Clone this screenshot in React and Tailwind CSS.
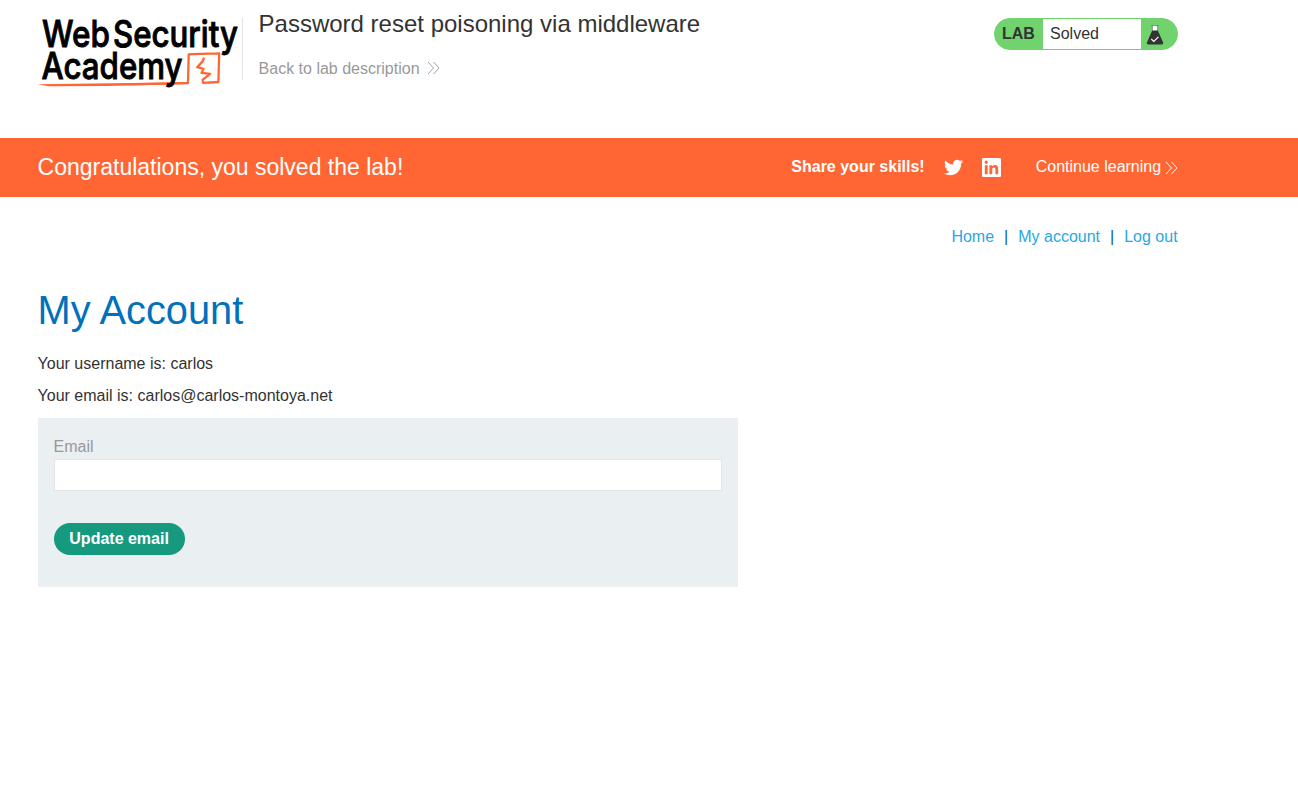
function Logo() {
  return (
    <svg className="block h-[70px] w-[204.4px] shrink-0 overflow-visible" viewBox="0 0 204.4 70" role="img" aria-label="Web Security Academy">
      <path
        d="M90 66.2 C115 65.6 132 65.6 150 65 L150.7 36.5 C160 35.6 172 35.8 181.2 35.4 L180.4 64 L165.2 64.8 L164.6 61.8 L172.2 55.8 L163.6 54.8 L165.6 50.8 L159.2 49.2 L164.6 43.4 L166 39.6"
        fill="none"
        stroke="#ff6633"
        strokeWidth="2.3"
        strokeLinejoin="round"
      />
      <path d="M0 66.2 L90 65.1 L134 64.8 L134 66.6 L70 68 L10 68.2 Z" fill="#ff6633" />
      <g fill="#000" stroke="#000" strokeWidth="0.9" fontFamily="Inter, 'Liberation Sans', sans-serif" fontSize="37" fontWeight="500">
        <text x="4" y="28.6" textLength="68" lengthAdjust="spacingAndGlyphs">Web</text>
        <text x="75" y="28.6" textLength="125" lengthAdjust="spacingAndGlyphs">Security</text>
        <text x="3.6" y="60.8" textLength="141" lengthAdjust="spacingAndGlyphs">Academy</text>
      </g>
    </svg>
  );
}

function DoubleChevron({ className }) {
  return (
    <svg className={className} viewBox="0 0 13 14" fill="none" stroke="currentColor" strokeWidth="0.9">
      <path d="M1 1 L6.5 7 L1 13 M6.5 1 L12 7 L6.5 13" />
    </svg>
  );
}

function Flask() {
  return (
    <svg className="block h-[22px] w-[18px]" viewBox="0 0 18 22">
      <path d="M6.5 1.5 H11.5 V8 H6.5 Z" fill="#fff" />
      <path d="M5.4 1.5 H12.6 M6.3 1 V7 M11.7 1 V7" stroke="#666" strokeWidth="0.6" />
      <path d="M6.2 6.5 H11.8 L17 18.3 Q17.6 20.5 15.5 20.5 H2.5 Q0.4 20.5 1 18.3 Z" fill="#333332" />
      <path d="M5.3 15 L7.8 17.4 L12.4 12.8" fill="none" stroke="#fff" strokeWidth="1.1" />
    </svg>
  );
}

function Twitter() {
  return (
    <svg className="block size-[19px]" viewBox="0 0 24 24" fill="#fff">
      <path d="M23.953 4.57a10 10 0 01-2.825.775 4.958 4.958 0 002.163-2.723c-.951.555-2.005.959-3.127 1.184a4.92 4.92 0 00-8.384 4.482C7.69 8.095 4.067 6.13 1.64 3.162a4.822 4.822 0 00-.666 2.475c0 1.71.87 3.213 2.188 4.096a4.904 4.904 0 01-2.228-.616v.06a4.923 4.923 0 003.946 4.827 4.996 4.996 0 01-2.212.085 4.936 4.936 0 004.604 3.417 9.867 9.867 0 01-6.102 2.105c-.39 0-.779-.023-1.17-.067a13.995 13.995 0 007.557 2.209c9.053 0 13.998-7.496 13.998-13.985 0-.21 0-.42-.015-.63A9.935 9.935 0 0024 4.59z" />
    </svg>
  );
}

function LinkedIn() {
  return (
    <svg className="block size-[19px]" viewBox="0 0 24 24" fill="#fff">
      <path d="M20.447 20.452h-3.554v-5.569c0-1.328-.027-3.037-1.852-3.037-1.853 0-2.136 1.445-2.136 2.939v5.667H9.351V9h3.414v1.561h.046c.477-.9 1.637-1.85 3.37-1.85 3.601 0 4.267 2.37 4.267 5.455v6.286zM5.337 7.433a2.062 2.062 0 01-2.063-2.065 2.064 2.064 0 112.063 2.065zm1.782 13.019H3.555V9h3.564v11.452zM22.225 0H1.771C.792 0 0 .774 0 1.729v20.542C0 23.227.792 24 1.771 24h20.451C23.2 24 24 23.227 24 22.271V1.729C24 .774 23.2 0 22.222 0h.003z" />
    </svg>
  );
}

export default function App() {
  return (
    <div className="min-h-screen bg-white font-['Liberation_Sans',Arial,sans-serif] text-base text-[#333332]">
      <header className="flex h-[138px] items-start pr-[120.4px] pl-[37.6px] pt-[18px]">
        <Logo />
        <div className="flex h-[62px] flex-1 flex-col border-l border-[#e4e4e4] pl-[15.6px]">
          <h1 className="-mt-2 text-2xl leading-7">Password reset poisoning via middleware</h1>
          <a href="#" className="mt-[19px] flex items-center gap-[7px] leading-6 text-[#999999]">
            Back to lab description
            <DoubleChevron className="mb-0.5 h-[14px] w-[13px]" />
          </a>
        </div>
        <div className="flex h-8 w-[184px] overflow-hidden rounded-2xl border border-[#70d36e] bg-[#70d36e] leading-[30px]">
          <span className="w-12 pl-[7.4px] font-bold">LAB</span>
          <p className="w-[98px] bg-white pl-[7.4px]">Solved</p>
          <span className="pt-[5px] pl-[5px]">
            <Flask />
          </span>
        </div>
      </header>

      <section className="flex h-[59px] items-center bg-[#ff6633] pr-[120.4px] pl-[37.6px] text-white">
        <h2 className="flex-1 text-[23px]">Congratulations, you solved the lab!</h2>
        <div className="flex items-center">
          <span className="mb-0.5 font-bold">Share your skills!</span>
          <a href="#" aria-label="Twitter" className="ml-[19px]"><Twitter /></a>
          <a href="#" aria-label="LinkedIn" className="ml-[19px]"><LinkedIn /></a>
          <a href="#" className="mb-0.5 ml-[35px] flex items-center gap-[3.5px]">
            Continue learning
            <DoubleChevron className="mt-[3px] h-[14px] w-[13px]" />
          </a>
        </div>
      </section>

      <main className="pr-[120.4px] pl-[37.6px]">
        <nav className="flex justify-end gap-[10px] pt-7 leading-6 text-[#29a7df]">
          <a href="#">Home</a>
          <span className="text-[#0b5cab]">|</span>
          <a href="#">My account</a>
          <span className="text-[#0b5cab]">|</span>
          <a href="#">Log out</a>
        </nav>
        <h1 className="mt-[37px] text-[39.8px] leading-12 text-[#0071ba]">My Account</h1>
        <p className="mt-[18px] leading-6">Your username is: carlos</p>
        <p className="mt-2 leading-6">Your email is: carlos@carlos-montoya.net</p>
        <form className="mt-[10px] h-[169px] w-[700px] bg-[#eaeff2] px-4 pt-4">
          <label htmlFor="email" className="block leading-[25px] text-[#999999]">Email</label>
          <input id="email" type="email" className="block h-8 w-full border border-[#e4e4e4] bg-white px-2" />
          <button type="button" className="mt-8 h-8 w-[131px] rounded-full bg-[#159a80] font-bold text-white">
            Update email
          </button>
        </form>
      </main>
    </div>
  );
}
